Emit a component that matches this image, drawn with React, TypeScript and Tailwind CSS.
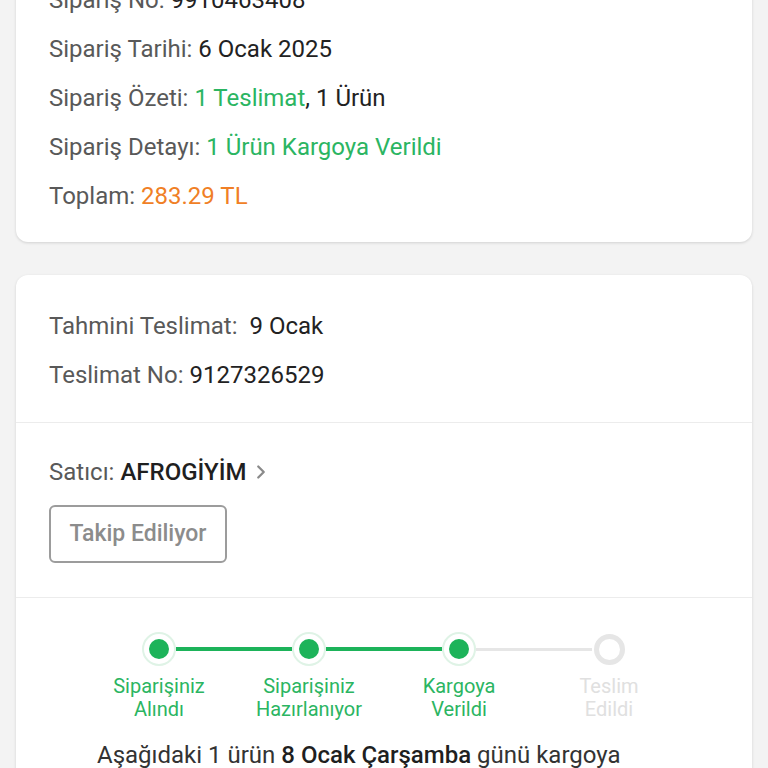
import { ChevronRight } from 'lucide-react';

type Step = { top: string; bottom: string; done: boolean };

const steps: Step[] = [
  { top: 'Siparişiniz', bottom: 'Alındı', done: true },
  { top: 'Siparişiniz', bottom: 'Hazırlanıyor', done: true },
  { top: 'Kargoya', bottom: 'Verildi', done: true },
  { top: 'Teslim', bottom: 'Edildi', done: false },
];

function Row({ label, children }: { label: string; children: React.ReactNode }) {
  return (
    <div className="h-[49px] flex items-center text-[24px] text-[#595959]">
      <span>{label}</span>
      <span className="ml-[6px] text-[#222]">{children}</span>
    </div>
  );
}

function Dot({ done }: { done: boolean }) {
  if (!done) {
    return (
      <div className="w-[34px] h-[34px] flex items-center justify-center shrink-0">
        <div className="w-[31px] h-[31px] rounded-full border-[5px] border-[#e6e6e6] bg-white" />
      </div>
    );
  }
  return (
    <div className="w-[34px] h-[34px] rounded-full border-2 border-[#dff3e6] bg-white flex items-center justify-center shrink-0">
      <div className="w-[20px] h-[20px] rounded-full bg-[#1db35a]" />
    </div>
  );
}

export default function App() {
  return (
    <div
      className="w-[768px] h-[768px] overflow-hidden bg-[#f3f3f3] px-4"
      style={{ fontFamily: 'Roboto, "Noto Sans", sans-serif' }}
    >
      <div className="mt-[-49px] bg-white rounded-[12px] shadow-[0_1px_3px_rgba(0,0,0,0.14)] px-[33px] pt-6 pb-[22px]">
        <Row label="Sipariş No:">9910463408</Row>
        <Row label="Sipariş Tarihi:">6 Ocak 2025</Row>
        <Row label="Sipariş Özeti:">
          <span className="text-[#2bb562]">1 Teslimat</span>, 1 Ürün
        </Row>
        <Row label="Sipariş Detayı:">
          <span className="text-[#2bb562]">1 Ürün Kargoya Verildi</span>
        </Row>
        <Row label="Toplam:">
          <span className="text-[#f07f26]">283.29 TL</span>
        </Row>
      </div>

      <div className="mt-[33px] bg-white rounded-[12px] shadow-[0_1px_3px_rgba(0,0,0,0.14)]">
        <div className="px-[33px] pt-[26px] pb-[23px] border-b border-[#ececec]">
          <div className="h-[49px] flex items-center text-[24px] text-[#595959]">
            <span>Tahmini Teslimat:</span>
            <span className="ml-[12px] text-[#222]">9 Ocak</span>
          </div>
          <Row label="Teslimat No:">9127326529</Row>
        </div>

        <div className="px-[33px] pt-[35px] pb-[34px] border-b border-[#ececec]">
          <div className="h-[28px] flex items-center text-[24px] text-[#595959]">
            <span>Satıcı:</span>
            <span className="ml-[6px] text-[#1f1f1f] font-medium">AFROGİYİM</span>
            <ChevronRight className="ml-[4px] text-[#8a8a8a]" size={22} strokeWidth={2.5} />
          </div>
          <button
            type="button"
            className="mt-[19px] w-[178px] h-[58px] rounded-[6px] border-2 border-[#9c9c9c] text-[23px] font-medium text-[#8c8c8c] flex items-center justify-center"
          >
            Takip Ediliyor
          </button>
        </div>

        <div className="pt-[34px] pb-10">
          <div className="w-[600px] mx-auto">
            <div className="flex items-center px-[58px]">
              {steps.map((step, i) => (
                <div key={i} className={i < steps.length - 1 ? 'flex items-center flex-1' : 'flex items-center'}>
                  <Dot done={step.done} />
                  {i < steps.length - 1 && (
                    <div className={steps[i + 1].done ? 'flex-1 h-[4px] bg-[#1db35a]' : 'flex-1 h-[3px] bg-[#e6e6e6]'} />
                  )}
                </div>
              ))}
            </div>
            <div className="grid grid-cols-4 mt-[9px]">
              {steps.map((step, i) => (
                <div
                  key={i}
                  className={
                    step.done
                      ? 'text-center text-[20px] leading-[23px] text-[#2bb562]'
                      : 'text-center text-[20px] leading-[23px] text-[#e0e0e0]'
                  }
                >
                  <div>{step.top}</div>
                  <div>{step.bottom}</div>
                </div>
              ))}
            </div>
          </div>
          <p className="mt-[20px] pl-[81px] text-[24px] leading-[28px] text-[#333]">
            Aşağıdaki 1 ürün <span className="font-medium text-[#1f1f1f]">8 Ocak Çarşamba</span> günü kargoya
            <br />
            verilmiştir.
          </p>
        </div>
      </div>
    </div>
  );
}
